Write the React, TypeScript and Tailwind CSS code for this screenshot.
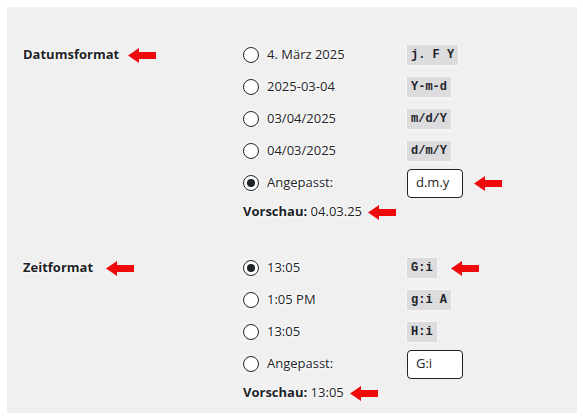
import React from "react";

const glow = "[text-shadow:0_0_3px_#fff,0_0_3px_#fff,0_0_2px_#fff]";

function Arrow({ className = "" }: { className?: string }) {
  return (
    <svg width="28" height="15" viewBox="0 0 28 15" className={className}>
      <polygon points="0,7.5 11,0 11,4 28,4 28,11 11,11 11,15" fill="#ee0a0a" />
    </svg>
  );
}

function Radio({ checked }: { checked?: boolean }) {
  return (
    <span className="flex h-[16px] w-[16px] shrink-0 items-center justify-center rounded-full border border-[#1d2327] bg-white shadow-[0_0_3px_#fff]">
      {checked && <span className="h-[8px] w-[8px] rounded-full bg-[#1d2327]" />}
    </span>
  );
}

type Opt = { label: string; code?: string; custom?: string; checked?: boolean; arrow?: boolean };

function Row({ o }: { o: Opt }) {
  return (
    <div className="flex h-[32px] items-center">
      <div className="flex w-[164px] items-center gap-[8px]">
        <Radio checked={o.checked} />
        <span className={glow}>{o.label}</span>
      </div>
      {o.code && (
        <code className="bg-[#dcdcde] px-[4px] py-[2px] font-['Liberation_Mono',monospace] text-[12px] font-bold leading-[16px] text-[#1d2327] shadow-[0_0_3px_#fff]">
          {o.code}
        </code>
      )}
      {o.custom && (
        <div className="flex h-[29px] w-[56px] items-center rounded-[4px] border border-[#1d2327] bg-white px-[8px]">
          {o.custom}
        </div>
      )}
      {o.arrow && <Arrow className={o.custom ? "ml-[11px]" : "ml-[14px]"} />}
    </div>
  );
}

function Section({
  title,
  titleArrowGap,
  opts,
  preview,
  previewArrowGap,
}: {
  title: string;
  titleArrowGap: string;
  opts: Opt[];
  preview: string;
  previewArrowGap: string;
}) {
  return (
    <div className="flex">
      <div className="flex h-[32px] w-[220px] items-center">
        <span className={`font-bold ${glow}`}>{title}</span>
        <Arrow className={titleArrowGap} />
      </div>
      <div className="flex flex-col">
        {opts.map((o) => (
          <Row key={o.label + o.code} o={o} />
        ))}
        <div className="flex h-[26px] items-center">
          <span className={glow}>
            <strong>Vorschau:</strong> {preview}
          </span>
          <Arrow className={previewArrowGap} />
        </div>
      </div>
    </div>
  );
}

export default function App() {
  return (
    <div className="min-h-screen bg-white p-[7px] font-['Open_Sans',sans-serif] text-[13px] text-[#1d2327]">
      <div className="h-[406px] w-[570px] bg-[#f0f0f1] pl-[16px] pt-[32px]">
        <Section
          title="Datumsformat"
          titleArrowGap="ml-[9px]"
          opts={[
            { label: "4. März 2025", code: "j. F Y" },
            { label: "2025-03-04", code: "Y-m-d" },
            { label: "03/04/2025", code: "m/d/Y" },
            { label: "04/03/2025", code: "d/m/Y" },
            { label: "Angepasst:", custom: "d.m.y", checked: true, arrow: true },
          ]}
          preview="04.03.25"
          previewArrowGap="ml-[6px]"
        />
        <div className="mt-[27px]">
          <Section
            title="Zeitformat"
            titleArrowGap="ml-[13px]"
            opts={[
              { label: "13:05", code: "G:i", checked: true, arrow: true },
              { label: "1:05 PM", code: "g:i A" },
              { label: "13:05", code: "H:i" },
              { label: "Angepasst:", custom: "G:i" },
            ]}
            preview="13:05"
            previewArrowGap="ml-[6px]"
          />
        </div>
      </div>
    </div>
  );
}
